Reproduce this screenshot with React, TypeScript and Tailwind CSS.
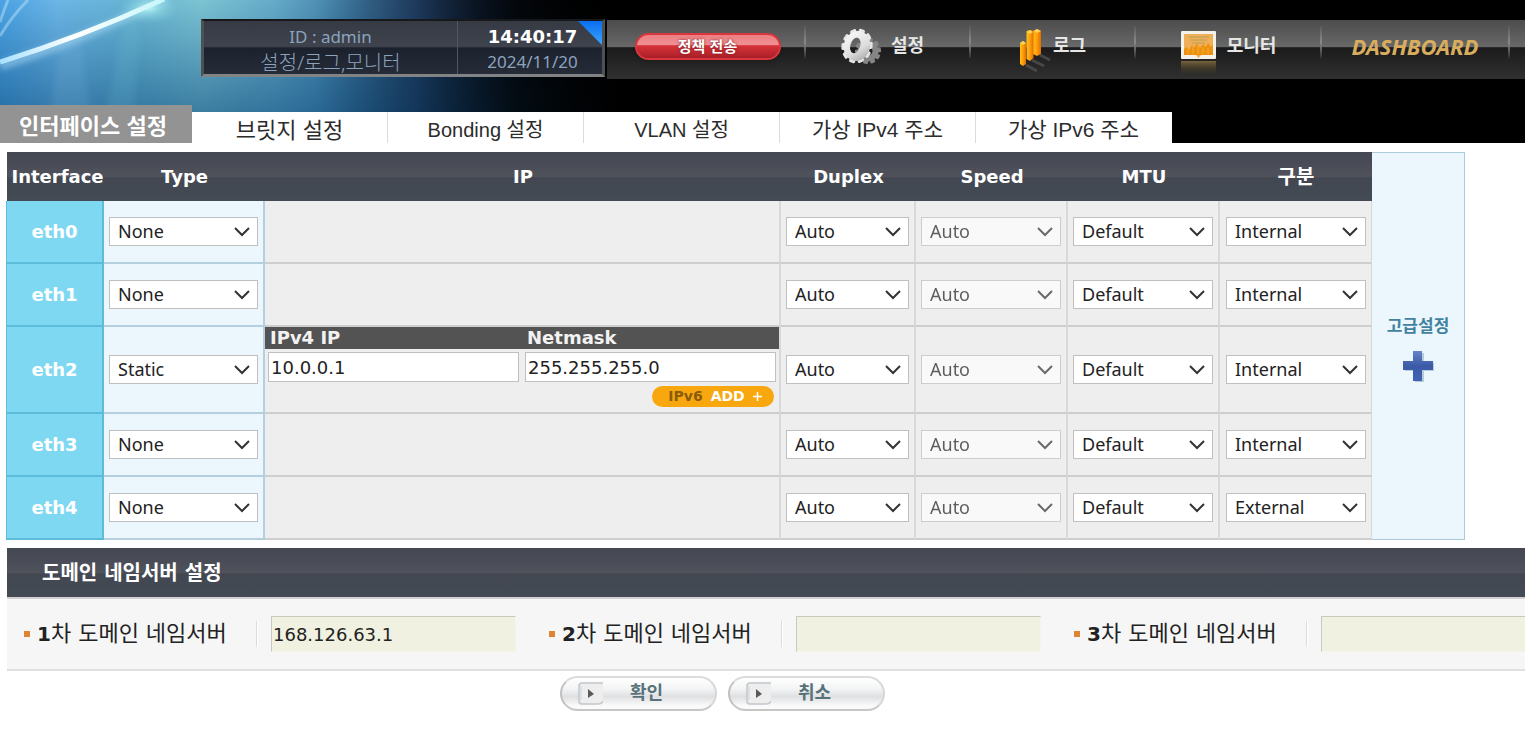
import React from 'react';
import { clsx } from 'clsx';

type InterfaceRow = {
  name: string;
  type: string;
  duplex: string;
  speed: string;
  mtu: string;
  zone: string;
  ip?: string;
  netmask?: string;
};

const INTERFACES: InterfaceRow[] = [
  { name: 'eth0', type: 'None', duplex: 'Auto', speed: 'Auto', mtu: 'Default', zone: 'Internal' },
  { name: 'eth1', type: 'None', duplex: 'Auto', speed: 'Auto', mtu: 'Default', zone: 'Internal' },
  {
    name: 'eth2',
    type: 'Static',
    duplex: 'Auto',
    speed: 'Auto',
    mtu: 'Default',
    zone: 'Internal',
    ip: '10.0.0.1',
    netmask: '255.255.255.0'
  },
  { name: 'eth3', type: 'None', duplex: 'Auto', speed: 'Auto', mtu: 'Default', zone: 'Internal' },
  { name: 'eth4', type: 'None', duplex: 'Auto', speed: 'Auto', mtu: 'Default', zone: 'External' }
];

const TABS = [
  { label: '브릿지 설정', size: 'text-[22px]' },
  { label: 'Bonding 설정', size: 'text-[20px]' },
  { label: 'VLAN 설정', size: 'text-[20px]' },
  { label: '가상 IPv4 주소', size: 'text-[21px]' },
  { label: '가상 IPv6 주소', size: 'text-[21px]' }
];

const DNS_SERVERS = [
  { order: '1', value: '168.126.63.1' },
  { order: '2', value: '' },
  { order: '3', value: '' }
];

const SANS = "font-['DejaVu_Sans','Noto_Sans_CJK_KR',sans-serif]";
const NOTO = "font-['Noto_Sans','Noto_Sans_CJK_KR',sans-serif]";
const KOREAN = "font-['Liberation_Sans','Noto_Sans_CJK_KR',sans-serif]";
const BAR = 'bg-[linear-gradient(#444852_0%,#4f515b_50%,#424751_53%,#444b55_100%)]';

function HeaderBackdrop() {
  return (
    <svg className="absolute inset-y-0 left-0 h-full w-[720px]" viewBox="0 0 720 143" preserveAspectRatio="none" aria-hidden="true">
      <defs>
        <linearGradient id="sky" x1="0" x2="1" y1="0" y2="0">
          <stop offset="0" stopColor="#4ba3e4" />
          <stop offset="0.08" stopColor="#6cb6e6" />
          <stop offset="0.18" stopColor="#66b4d4" />
          <stop offset="0.28" stopColor="#7cc3d2" />
          <stop offset="0.38" stopColor="#66abc8" />
          <stop offset="0.48" stopColor="#427fa8" />
          <stop offset="0.58" stopColor="#2b5080" />
          <stop offset="0.68" stopColor="#152a48" />
          <stop offset="0.82" stopColor="#03070c" />
          <stop offset="0.95" stopColor="#000000" />
        </linearGradient>
        <linearGradient id="depth" x1="0" x2="0" y1="0" y2="1">
          <stop offset="0" stopColor="#0e4d80" stopOpacity="0" />
          <stop offset="0.75" stopColor="#0c4a7c" stopOpacity="0.55" />
          <stop offset="1" stopColor="#0a3c68" stopOpacity="0.7" />
        </linearGradient>
        <linearGradient id="fade" x1="0" x2="1" y1="0" y2="0">
          <stop offset="0.44" stopColor="#000000" stopOpacity="0" />
          <stop offset="0.58" stopColor="#000000" stopOpacity="0.3" />
          <stop offset="0.72" stopColor="#000000" stopOpacity="0.8" />
          <stop offset="0.86" stopColor="#000000" />
        </linearGradient>
        <radialGradient id="glow">
          <stop offset="0" stopColor="#b8f6f6" />
          <stop offset="0.35" stopColor="#9de3ea" stopOpacity="0.6" />
          <stop offset="1" stopColor="#8ad0e0" stopOpacity="0" />
        </radialGradient>
        <linearGradient id="streak" x1="0" x2="1" y1="0" y2="0">
          <stop offset="0" stopColor="#a8e2ff" />
          <stop offset="0.45" stopColor="#ffffff" />
          <stop offset="1" stopColor="#c6f6fa" />
        </linearGradient>
        <filter id="soft" x="-20%" y="-20%" width="140%" height="140%">
          <feGaussianBlur stdDeviation="3" />
        </filter>
      </defs>
      <rect width="720" height="143" fill="url(#sky)" />
      <rect width="720" height="143" fill="url(#depth)" />
      <rect width="720" height="143" fill="url(#fade)" />
      <g filter="url(#soft)">
        <path d="M44 143L62 40L80 36L94 143Z" fill="#9cd0f0" opacity="0.12" />
        <path d="M100 143L125 20L140 10L132 143Z" fill="#7cd0dc" opacity="0.14" />
        <path d="M0 66Q84 40 166 -2" fill="none" stroke="#bfeaff" strokeWidth="8" opacity="0.5" />
      </g>
      <ellipse cx="149" cy="8" rx="30" ry="16" fill="url(#glow)" />
      <path d="M0 36Q12 16 28 0M0 22Q4 10 8 0" fill="none" stroke="#cdf0ff" strokeWidth="3" opacity="0.4" />
      <path d="M0 62Q84 36 164 -1" fill="none" stroke="url(#streak)" strokeWidth="5" />
    </svg>
  );
}

function GearIcon() {
  const teeth = [0, 36, 72, 108, 144, 180, 216, 252, 288, 324];
  return (
    <svg className="h-[38px] w-[42px]" viewBox="0 0 42 38" aria-hidden="true">
      <defs>
        <linearGradient id="steel" x1="0" x2="1" y1="0" y2="1">
          <stop offset="0" stopColor="#ffffff" />
          <stop offset="0.6" stopColor="#dcdcdc" />
          <stop offset="1" stopColor="#9c9c9c" />
        </linearGradient>
      </defs>
      <g transform="translate(29 23) rotate(12)" fill="#858585">
        {teeth.map((a) => (
          <rect key={a} x="-2.5" y="-13" width="5" height="6" rx="1" transform={`rotate(${a})`} />
        ))}
        <circle r="7.5" fill="none" stroke="#858585" strokeWidth="6" />
      </g>
      <g transform="translate(18 18) rotate(18) scale(0.88 1)" fill="url(#steel)">
        {teeth.map((a) => (
          <rect key={a} x="-3.500" y="-17.500" width="7" height="7" rx="1.5" fill="#e6e6e6" transform={`rotate(${a})`} />
        ))}
        <path
          fillRule="evenodd"
          d="M0-15A15 15 0 1 1 0 15A15 15 0 1 1 0-15ZM-2-8A5.500 8 0 1 0-2 8A5.500 8 0 1 0-2-8Z"
        />
      </g>
    </svg>
  );
}

function LogIcon() {
  return (
    <svg className="h-[44px] w-[32px]" viewBox="0 0 32 44" aria-hidden="true">
      <defs>
        <linearGradient id="bar" x1="0" x2="1" y1="0" y2="0">
          <stop offset="0" stopColor="#ffc21a" />
          <stop offset="0.5" stopColor="#ff9d0a" />
          <stop offset="1" stopColor="#e06f00" />
        </linearGradient>
      </defs>
      <path d="M7 36L18 42M13 31L25 37M21 26L31 31" stroke="#555" strokeWidth="3" opacity="0.7" />
      <path d="M1 14L4 12L7 14V35L4 37L1 35Z" fill="url(#bar)" />
      <path d="M14 2L18 0L22 2V25L18 27L14 25Z" fill="url(#bar)" />
      <path d="M7.500 2L11 1L14.500 2V29L11 32L7.500 30Z" fill="url(#bar)" />
      <path d="M1 14L4 12L7 14L4 16ZM8 3L11 1L14 3L11 5ZM15 2L18 0L22 2L18 4Z" fill="#ffd45a" />
    </svg>
  );
}

function MonitorIcon() {
  return (
    <svg className="h-[46px] w-[37px]" viewBox="0 0 37 46" aria-hidden="true">
      <defs>
        <linearGradient id="mirror" x1="0" x2="0" y1="0" y2="1">
          <stop offset="0" stopColor="#77653c" />
          <stop offset="1" stopColor="#3a3322" stopOpacity="0.2" />
        </linearGradient>
      </defs>
      <rect x="1" y="1" width="35" height="28" rx="1" fill="#f4f0ea" />
      <rect x="4" y="4" width="29" height="21" fill="#f0b05a" />
      <path d="M4 25V19L7 17L9 20L12 15L14 18L17 13L20 18L23 14L26 17L28 13L31 17L33 14V25Z" fill="#ee920e" />
      <path d="M8 7H29M10 10H27M12 13H25" stroke="#c9a759" strokeWidth="1.500" />
      <path d="M8 24V19M13 24V17M18 24V15M23 24V17M28 24V18" stroke="#f4ad3c" />
      <path d="M16 25H21L18.500 28Z" fill="#f3a94a" />
      <rect x="1" y="31" width="35" height="13" fill="url(#mirror)" />
    </svg>
  );
}

function StatusBox() {
  return (
    <div className={clsx('relative flex h-[58px] w-[404px] shrink-0 border-x-[3px] border-t-2 border-b-[3px] border-x-[#4e5054] border-t-[#16181b] border-b-[#828384] bg-[linear-gradient(#363a43_0%,#3e434e_48%,#1b212d_51%,#252b37_100%)] text-[17px] text-[#8ba3bd]', NOTO)}>
      <div className="w-[254px] border-r border-[#4d5866] pt-[3px] text-center">
        <p className="leading-[25px]">ID : admin</p>
        <p className="text-[20px] leading-[28px] font-light">설정/로그,모니터</p>
      </div>
      <div className="flex-1 pt-[3px] pl-[5px] text-center">
        <p className={clsx('text-[18px] leading-[25px] font-bold text-white', SANS)}>14:40:17</p>
        <p className="leading-[25px]">2024/11/20</p>
      </div>
      <span className="absolute top-0 right-0 h-6 w-6 bg-[linear-gradient(#0a6ef0,#3aa6ff)] [clip-path:polygon(0_0,100%_0,100%_100%)]" />
    </div>
  );
}

function NavDivider() {
  return <span className="mt-1.5 h-8 w-[2px] shrink-0 self-start bg-[linear-gradient(#5a5a5a,#8a8a8a_50%,#303030)]" />;
}

function NavBar() {
  const link = 'flex h-full items-center justify-center text-[18px] font-bold text-[#e6e6e6]';
  return (
    <nav className={clsx('mt-px ml-[2px] flex h-[59px] flex-1 items-center overflow-hidden bg-[linear-gradient(#4c4c4c_0%,#686868_45%,#1b1b1b_47%,#303030_100%)]', KOREAN)}>
      <div className="flex h-full w-[197px] shrink-0 justify-center pt-[13px] pl-1">
        <button
          type="button"
          className="h-[27px] w-[146px] rounded-full border-2 border-[#d9363d] bg-[linear-gradient(#ee7f83_0%,#ef9295_44%,#d8333a_46%,#a91f27_100%)] text-[15px] leading-[22px] font-bold text-white shadow-md [text-shadow:0_0_3px_#7a1a1e]"
        >
          정책 전송
        </button>
      </div>
      <NavDivider />
      <a href="#settings" className={clsx(link, 'w-[163px] shrink-0 gap-2.5 pr-3 pb-1.5')}>
        <GearIcon />
        설정
      </a>
      <NavDivider />
      <a href="#log" className={clsx(link, 'w-[163px] shrink-0 gap-0.5 pb-1.5')}>
        <span className="pt-2">
          <LogIcon />
        </span>
        로그
      </a>
      <NavDivider />
      <a href="#monitor" className={clsx(link, 'w-[184px] shrink-0 gap-2.5 pb-1.5')}>
        <span className="pt-3">
          <MonitorIcon />
        </span>
        모니터
      </a>
      <NavDivider />
      <a href="#dashboard" className="flex h-full w-[186px] shrink-0 items-center justify-center pb-1.5 font-['Noto_Sans',sans-serif] text-[22px] font-bold text-[#d9ad5e] italic">
        DASHBOARD
      </a>
      <NavDivider />
    </nav>
  );
}

function Header() {
  return (
    <header className="relative flex h-[143px] flex-col justify-between overflow-hidden bg-black">
      <HeaderBackdrop />
      <div className="relative flex items-start pt-[19px] pl-[201px]">
        <StatusBox />
        <NavBar />
      </div>
      <div className={clsx('relative flex items-end', KOREAN)}>
        <a href="#interface" className="flex h-[38px] w-[192px] items-center justify-center bg-[#939393] pt-[5px] pr-[6px] text-[22px] font-bold text-white">
          인터페이스 설정
        </a>
        {TABS.map((tab) => (
          <a
            key={tab.label}
            href="#tab"
            className={clsx('flex h-[31px] w-[196px] items-center justify-center border-r border-[#dcdcdc] bg-white pt-[5px] text-[#2c2c2c] last:border-white', tab.size)}
          >
            {tab.label}
          </a>
        ))}
      </div>
    </header>
  );
}

type SelectProps = {
  label: string;
  value: string;
  options: string[];
  disabled?: boolean;
};

function Select({ label, value, options, disabled }: SelectProps) {
  return (
    <div className={clsx('relative', disabled && 'opacity-70')}>
      <select
        aria-label={label}
        defaultValue={value}
        disabled={disabled}
        className={clsx('block h-[29px] w-full appearance-none border border-[#c0c0c0] bg-white pb-px pl-2 text-[18px] leading-[26px] text-[#222]', NOTO)}
      >
        {options.map((option) => (
          <option key={option}>{option}</option>
        ))}
      </select>
      <svg className="pointer-events-none absolute top-[10px] right-[8px] h-[10px] w-[16px]" viewBox="0 0 16 10" fill="none" aria-hidden="true">
        <path d="M1 1L8 8L15 1" stroke="#333" strokeWidth="2" />
      </svg>
    </div>
  );
}

function StaticAddress({ row }: { row: InterfaceRow }) {
  const input = 'mx-[3px] block h-[30px] border border-[#c0c0c0] bg-white px-[2px] text-[18px] text-[#222]';
  return (
    <div className="flex h-[85px] flex-col">
      <div className="grid grid-cols-2 bg-[#535353] text-[18px] leading-[22px] font-bold text-[#f2f2f2]">
        <label htmlFor="ipv4" className="pl-[5px]">IPv4 IP</label>
        <label htmlFor="netmask" className="pl-[5px]">Netmask</label>
      </div>
      <div className="mt-[3px] grid grid-cols-2">
        <input id="ipv4" defaultValue={row.ip} className={input} />
        <input id="netmask" defaultValue={row.netmask} className={input} />
      </div>
      <button
        type="button"
        className="mt-1 mr-[5px] flex h-[21px] w-[122px] items-center justify-center gap-2 self-end rounded-full bg-[#f8a70e] pl-1 text-[14px] font-bold text-white"
      >
        <span className="text-[#8a5c0c]">IPv6</span>
        <span>ADD</span>
        <svg className="h-[9px] w-[9px]" viewBox="0 0 9 9" aria-hidden="true">
          <path d="M4.500 0V9M0 4.500H9" stroke="#fff" strokeWidth="1.500" />
        </svg>
      </button>
    </div>
  );
}

function InterfaceTable() {
  const cell = 'border-r-2 border-b-2 border-r-[#d9d9d9] border-b-[#cecece] bg-[#eee] px-[5px]';
  return (
    <table className="flex-1 table-fixed border-separate border-spacing-0 text-[18px]">
      <colgroup>
        <col className="w-[98px]" />
        <col className="w-[161px]" />
        <col />
        <col className="w-[135px]" />
        <col className="w-[152px]" />
        <col className="w-[152px]" />
        <col className="w-[152px]" />
      </colgroup>
      <thead>
        <tr className="h-[49px] text-white">
          <th scope="col" className={clsx('border-l border-white pl-1', BAR)}>Interface</th>
          <th scope="col" className={BAR}>Type</th>
          <th scope="col" className={BAR}>IP</th>
          <th scope="col" className={BAR}>Duplex</th>
          <th scope="col" className={BAR}>Speed</th>
          <th scope="col" className={BAR}>MTU</th>
          <th scope="col" className={clsx('text-[20px]', BAR)}>구분</th>
        </tr>
      </thead>
      <tbody>
        {INTERFACES.map((row) => (
          <tr key={row.name} className="h-[63px]">
            <th scope="row" className="border-r-2 border-b-2 border-l border-[#5cbcd9] bg-[#7fd8f2] text-white">
              {row.name}
            </th>
            <td className="border-r-2 border-b-2 border-[#b4d0de] bg-[#ebf6fd] px-[5px]">
              <Select label={`${row.name} Type`} value={row.type} options={['None', 'Static', 'DHCP']} />
            </td>
            <td className="border-r-2 border-b-2 border-r-[#d9d9d9] border-b-[#cecece] bg-[#eee] p-0">
              {row.ip && <StaticAddress row={row} />}
            </td>
            <td className={cell}>
              <Select label={`${row.name} Duplex`} value={row.duplex} options={['Auto', 'Full', 'Half']} />
            </td>
            <td className={cell}>
              <Select label={`${row.name} Speed`} value={row.speed} options={['Auto', '100', '1000']} disabled />
            </td>
            <td className={cell}>
              <Select label={`${row.name} MTU`} value={row.mtu} options={['Default', '1500']} />
            </td>
            <td className="border-r border-b-2 border-r-[#d9d9d9] border-b-[#cecece] bg-[#eee] pr-[5px] pl-[6px]">
              <Select label={`${row.name} 구분`} value={row.zone} options={['Internal', 'External']} />
            </td>
          </tr>
        ))}
      </tbody>
    </table>
  );
}

function AdvancedPanel() {
  return (
    <aside className="flex w-[93px] shrink-0 border-y border-r border-[#abcbdc] bg-[#ebf6fd]">
      <button type="button" className="flex flex-1 flex-col items-center justify-center gap-2.5 pt-1 text-[17px] leading-[26px] font-bold text-[#42829f]">
        고급설정
        <svg className="h-[34px] w-[34px]" viewBox="0 0 34 34" aria-hidden="true">
          <defs>
            <linearGradient id="plus" x1="0" x2="0" y1="0" y2="1">
              <stop offset="0" stopColor="#6484cc" />
              <stop offset="0.5" stopColor="#3c5aa6" />
              <stop offset="1" stopColor="#3f63b5" />
            </linearGradient>
          </defs>
          <path d="M14 4H23V14H33V22H23V33H14V22H4V14H14Z" fill="#b9cbd8" />
          <path d="M12 2H21V12H32V21H21V32H12V21H2V12H12Z" fill="url(#plus)" />
        </svg>
      </button>
    </aside>
  );
}

function DnsSection() {
  return (
    <section className="mt-2 ml-[7px] overflow-hidden">
      <h2 className={clsx('h-[49px] pl-[35px] text-[20px] leading-[50px] font-bold text-white', BAR)}>도메인 네임서버 설정</h2>
      <div className="flex h-[74px] items-center border-y-2 border-t-[#d3d1d1] border-b-[#e0e0e0] bg-[#f6f6f6]">
        {DNS_SERVERS.map((server) => (
          <div key={server.order} className="flex w-[525px] shrink-0 items-center pl-[17px]">
            <span className="h-[6px] w-[6px] bg-[#de8433]" />
            <label htmlFor={`dns${server.order}`} className="w-[226px] pl-[7px] text-[22px] leading-[30px] text-[#222]">
              <b className="text-[20px]">{server.order}</b>차 도메인 네임서버
            </label>
            <span className="mr-[13px] h-[26px] w-[2px] border-r border-white bg-[#dcdcdc]" />
            <input
              id={`dns${server.order}`}
              defaultValue={server.value}
              className="h-[36px] w-[245px] border border-t-[#c9c9bd] border-r-[#f4f4e8] border-b-[#f4f4e8] border-l-[#c9c9bd] bg-[#f0f1e0] px-px text-[18px] text-[#222]"
            />
          </div>
        ))}
      </div>
    </section>
  );
}

function PillButton({ label }: { label: string }) {
  return (
    <button
      type="button"
      className="flex h-[35px] w-[157px] items-center rounded-full border-2 border-t-[#dcdcda] border-r-[#d6d6d4] border-b-[#c6c6c4] border-l-[#c0c0be] bg-[linear-gradient(#ffffff_0%,#f3f4f5_35%,#dfe0e2_60%,#fafafa_90%)] pl-4 text-[18px] font-bold text-[#587279]"
    >
      <svg className="mr-[27px] h-[23px] w-[25px]" viewBox="0 0 25 23" aria-hidden="true">
        <path d="M25 1H4Q1 1 1 4V19Q1 22 4 22H20Q24 22 25 19" fill="#eeeeee" stroke="#c3c7ca" strokeWidth="1.500" />
        <path d="M3 18V4" stroke="#cfd1d3" />
        <path d="M10 7L16 12L10 16Z" fill="#5a5a5a" />
      </svg>
      <span className="pb-0.5">{label}</span>
    </button>
  );
}

export default function App() {
  return (
    <div className={clsx('w-full overflow-x-hidden bg-white text-[#222]', SANS)}>
      <Header />
      <main>
        <div className="mt-[9px] flex pr-[60px] pl-[6px]">
          <InterfaceTable />
          <AdvancedPanel />
        </div>
        <DnsSection />
        <div className="flex justify-center gap-[11px] pt-[5px] pr-20">
          <PillButton label="확인" />
          <PillButton label="취소" />
        </div>
      </main>
    </div>
  );
}
